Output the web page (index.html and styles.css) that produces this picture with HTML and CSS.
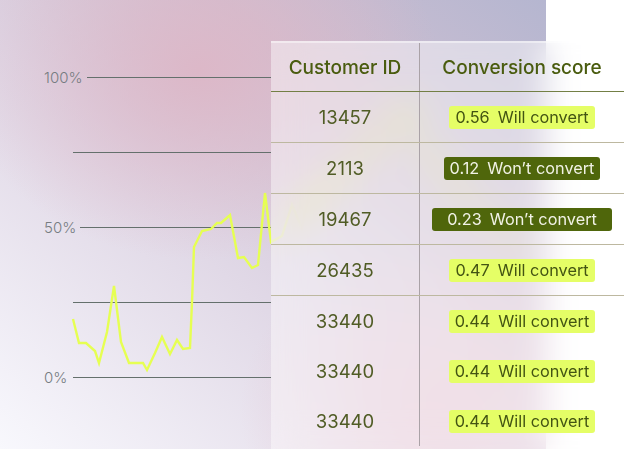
FILE: index.html
```html
<!DOCTYPE html>
<html lang="en">
<head>
<meta charset="utf-8">
<title>Conversion scores</title>
<link rel="stylesheet" href="styles.css">
</head>
<body>
<div class="stage">
  <div class="canvas">
    <svg class="chart" width="546" height="449" viewBox="0 0 546 449">
      <g class="grid">
        <line x1="87" y1="77.5" x2="271" y2="77.5"/>
        <line x1="73" y1="152.5" x2="271" y2="152.5"/>
        <line x1="80" y1="227.5" x2="271" y2="227.5"/>
        <line x1="73" y1="302.5" x2="271" y2="302.5"/>
        <line x1="73" y1="377.5" x2="271" y2="377.5"/>
      </g>
      <g class="labels">
        <text x="44" y="82.5">100%</text>
        <text x="44" y="232.5">50%</text>
        <text x="44" y="382.5">0%</text>
      </g>
      <polyline class="series" points="73,319 79,343 86,343 95,351 99,363 107,332 114,286 121,342 129,363 143,363 147,370 155,353 162,337 170,354 177,340 183,349 190,348 192,302 194,247 202,231 211,229 217,223 221,223 230,215 238,258 244,257 252,268 258,265 265,193 271,242 282,236 292,205 302,228 312,180 322,215 336,160 350,190 364,128 378,160 392,104 404,140 416,98 428,170 440,150 452,200 466,176 480,230 496,210 512,250 530,236"/>
    </svg>
  </div>
  <div class="blank"></div>

  <div class="card">
    <table class="scores">
      <thead>
        <tr><th>Customer ID</th><th>Conversion score</th></tr>
      </thead>
      <tbody>
        <tr class="ruled"><td>13457</td><td><span class="badge yes"><span>0.56</span><span>Will convert</span></span></td></tr>
        <tr class="ruled"><td>2113</td><td><span class="badge no"><span>0.12</span><span>Won’t convert</span></span></td></tr>
        <tr class="ruled"><td>19467</td><td><span class="badge no wide"><span>0.23</span><span>Won’t convert</span></span></td></tr>
        <tr class="ruled"><td>26435</td><td><span class="badge yes"><span>0.47</span><span>Will convert</span></span></td></tr>
        <tr><td>33440</td><td><span class="badge yes"><span>0.44</span><span>Will convert</span></span></td></tr>
        <tr><td>33440</td><td><span class="badge yes"><span>0.44</span><span>Will convert</span></span></td></tr>
        <tr><td>33440</td><td><span class="badge yes"><span>0.44</span><span>Will convert</span></span></td></tr>
      </tbody>
    </table>
  </div>
</div>
</body>
</html>
```

FILE: styles.css
```css
html, body {
  margin: 0;
  padding: 0;
  background: #ffffff;
}

body {
  font-family: "Inter", "Liberation Sans", sans-serif;
}

.stage {
  position: relative;
  width: 624px;
  height: 449px;
  display: flex;
  overflow: hidden;
}

.canvas {
  width: 546px;
  height: 449px;
  flex: none;
  background:
    radial-gradient(ellipse 240px 190px at 200px 70px, rgba(221, 182, 198, 0.9), rgba(221, 182, 198, 0) 100%),
    radial-gradient(ellipse 200px 170px at 440px 410px, rgba(232, 196, 210, 0.85), rgba(232, 196, 210, 0) 100%),
    linear-gradient(to bottom left, #b5b6d0 0%, #cfc0d2 30%, #ded5e4 55%, #f8f8fd 100%);
}

.chart {
  display: block;
}

.grid line {
  stroke: #64706c;
  stroke-width: 1;
}

.labels text {
  font-family: "Inter", "Liberation Sans", sans-serif;
  font-size: 15px;
  font-weight: 300;
  fill: #767c81;
}

.series {
  fill: none;
  stroke: #e6ff52;
  stroke-width: 2.4;
  stroke-linejoin: miter;
}

.blank {
  flex: 1;
  background: #ffffff;
}

.card {
  position: absolute;
  left: 271px;
  top: 41px;
  right: 0;
  bottom: 0;
  border-top: 2px solid rgba(255, 255, 255, 0.45);
  background: rgba(255, 255, 255, 0.44);
  -webkit-backdrop-filter: blur(16px);
  backdrop-filter: blur(16px);
}

.scores {
  width: 100%;
  border-collapse: collapse;
  table-layout: fixed;
}

.scores th,
.scores td {
  padding: 0;
  text-align: center;
  vertical-align: middle;
}

.scores th:first-child,
.scores td:first-child {
  width: 148px;
}

.scores th:last-child,
.scores td:last-child {
  border-left: 1px solid #aaa2a7;
}

.scores th {
  height: 48px;
  font-size: 19px;
  font-weight: 500;
  color: #4a5c0f;
  border-bottom: 1px solid #737f45;
}

.scores td {
  height: 50px;
  font-size: 18.5px;
  font-weight: 400;
  color: #505c25;
}

.scores tr.ruled td {
  border-bottom: 1px solid #bdb8a0;
}

.badge {
  display: inline-flex;
  align-items: center;
  gap: 8px;
  height: 23px;
  padding: 0 6px;
  border-radius: 3px;
  font-size: 16.3px;
  line-height: 23px;
  vertical-align: middle;
}

.badge.yes {
  background: #e5fe66;
  color: #435413;
}

.badge.no {
  background: #4f660b;
  color: #f1f2e6;
}

.badge.wide {
  padding: 0 15px;
}
```
